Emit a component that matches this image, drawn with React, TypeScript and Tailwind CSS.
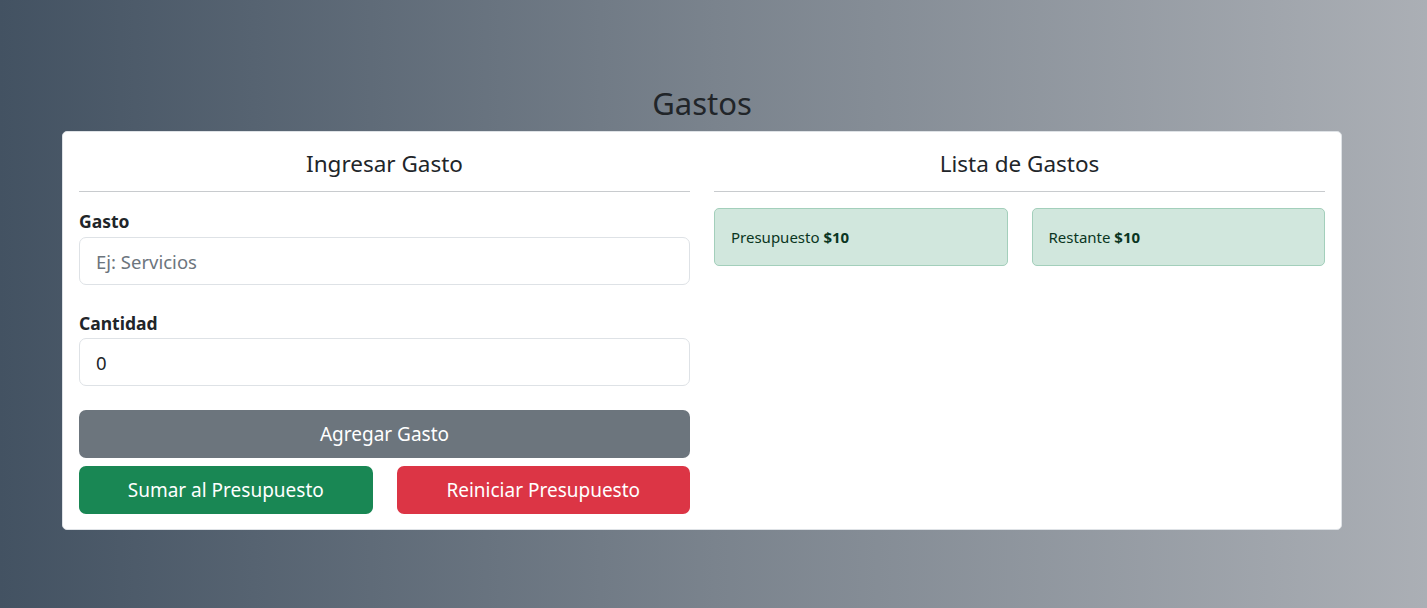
import { useState } from 'react';

const font = { fontFamily: '"Noto Sans", "Open Sans", sans-serif' };

export default function App() {
    const [gasto, setGasto] = useState('');
    const [cantidad, setCantidad] = useState('0');
    const presupuesto = 10;
    const restante = 10;

    return (
        <div
            className="min-h-[608px] w-full bg-gradient-to-r from-[#435262] via-[#7a838d] to-[#abafb5] text-[#212529] pt-[80px] pb-[76px] pl-[62px] pr-[85px]"
            style={font}
        >
            <h1 className="text-center text-[31px] leading-[46px] mb-[5px] font-normal">Gastos</h1>

            <div className="bg-white rounded-[5px] border border-[#dee2e6] px-4 pt-[17px] pb-[15px] grid grid-cols-2 gap-6">
                {/* Ingresar Gasto */}
                <div className="flex flex-col">
                    <h2 className="text-center text-[22.5px] leading-[30px] pb-[12px] border-b border-[#c8cbce]">
                        Ingresar Gasto
                    </h2>

                    <label className="mt-[18px] font-bold text-[17.5px] leading-[22px] mb-[5px]">Gasto</label>
                    <input
                        type="text"
                        placeholder="Ej: Servicios"
                        value={gasto}
                        onChange={(e) => setGasto(e.target.value)}
                        className="h-[48px] w-full rounded-[7px] border border-[#dee2e6] px-4 text-[18.5px] placeholder:text-[#6c757d] outline-none"
                    />

                    <label className="mt-[27px] font-bold text-[17.5px] leading-[22px] mb-[4px]">Cantidad</label>
                    <input
                        type="number"
                        value={cantidad}
                        onChange={(e) => setCantidad(e.target.value)}
                        className="h-[48px] w-full rounded-[7px] border border-[#dee2e6] px-4 text-[18.5px] outline-none"
                    />

                    <button className="mt-[24px] h-[48px] w-full rounded-[7px] bg-[#6c757d] text-white text-[19px]">
                        Agregar Gasto
                    </button>

                    <div className="mt-2 grid grid-cols-2 gap-6">
                        <button className="h-[48px] rounded-[7px] bg-[#198754] text-white text-[19px]">
                            Sumar al Presupuesto
                        </button>
                        <button className="h-[48px] rounded-[7px] bg-[#dc3545] text-white text-[19px]">
                            Reiniciar Presupuesto
                        </button>
                    </div>
                </div>

                {/* Lista de Gastos */}
                <div className="flex flex-col">
                    <h2 className="text-center text-[22.5px] leading-[30px] pb-[12px] border-b border-[#c8cbce]">
                        Lista de Gastos
                    </h2>

                    <div className="mt-4 grid grid-cols-2 gap-6">
                        <div className="h-[58px] rounded-[5px] border border-[#a3cfbb] bg-[#d1e7dd] text-[#0a3622] text-[15px] flex items-center px-4">
                            <span>
                                Presupuesto <strong>${presupuesto}</strong>
                            </span>
                        </div>
                        <div className="h-[58px] rounded-[5px] border border-[#a3cfbb] bg-[#d1e7dd] text-[#0a3622] text-[15px] flex items-center px-4">
                            <span>
                                Restante <strong>${restante}</strong>
                            </span>
                        </div>
                    </div>
                </div>
            </div>
        </div>
    );
}
